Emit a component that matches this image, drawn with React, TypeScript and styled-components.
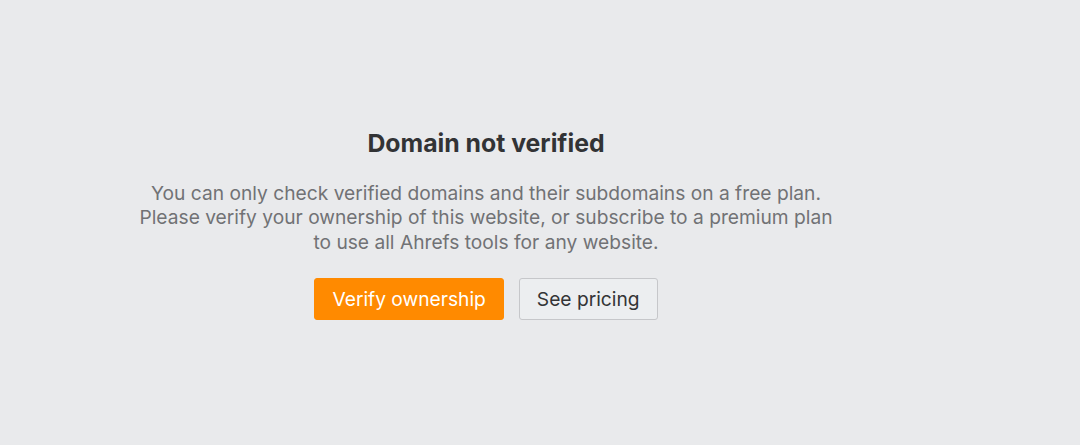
import React from "react";
import styled, { createGlobalStyle } from "styled-components";

const Global = createGlobalStyle`
  html, body { margin: 0; padding: 0; background: #e9eaec; }
  body { font-family: Inter, "Noto Sans", sans-serif; }
`;

const Page = styled.main`
  width: 1080px;
  height: 445px;
  box-sizing: border-box;
  padding: 127px 108px 0 0;
  display: flex;
  justify-content: center;
  background: #e9eaec;
`;

const Panel = styled.section`
  display: flex;
  flex-direction: column;
  align-items: center;
  text-align: center;
`;

const Title = styled.h1`
  margin: 0;
  font-size: 24.8px;
  line-height: 32px;
  font-weight: 700;
  color: #323335;
`;

const Text = styled.p`
  margin: 22px 0 0;
  font-size: 19.2px;
  line-height: 24.3px;
  color: #717275;
`;

const Actions = styled.div`
  display: flex;
  gap: 15px;
  margin-top: 24px;
`;

const Button = styled.button<{ $primary?: boolean }>`
  height: 42px;
  box-sizing: border-box;
  padding: 0 17px;
  border-radius: 3px;
  font-family: inherit;
  font-size: 19.2px;
  cursor: pointer;
  border: 1px solid ${(p) => (p.$primary ? "#ff8a00" : "#c6c7ca")};
  background: ${(p) => (p.$primary ? "#ff8a00" : "#eceef0")};
  color: ${(p) => (p.$primary ? "#ffffff" : "#333436")};
`;

export default function App() {
  return (
    <>
      <Global />
      <Page>
        <Panel>
          <Title>Domain not verified</Title>
          <Text>
            You can only check verified domains and their subdomains on a free plan.
            <br />
            Please verify your ownership of this website, or subscribe to a premium plan
            <br />
            to use all Ahrefs tools for any website.
          </Text>
          <Actions>
            <Button $primary>Verify ownership</Button>
            <Button>See pricing</Button>
          </Actions>
        </Panel>
      </Page>
    </>
  );
}
